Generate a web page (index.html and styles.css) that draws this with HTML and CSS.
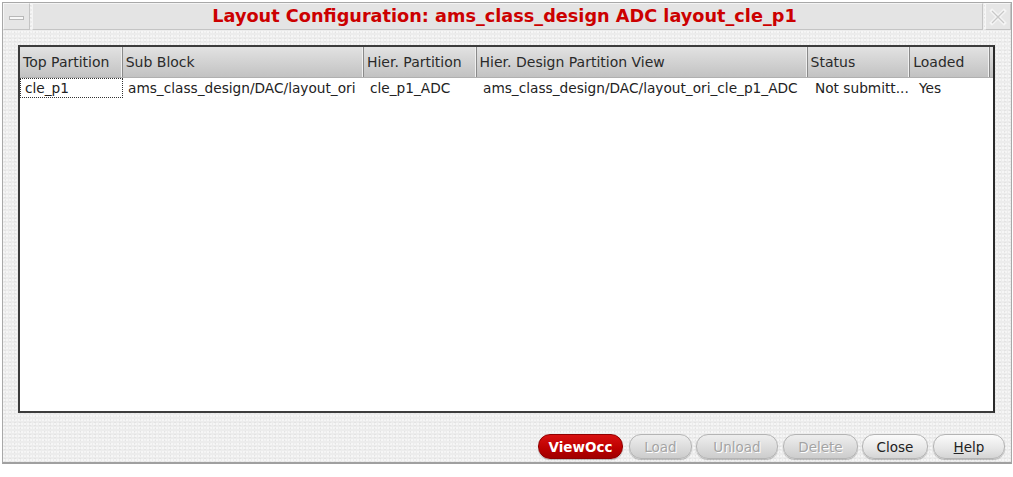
FILE: index.html
```html
<!DOCTYPE html>
<html>
<head>
<meta charset="utf-8">
<link rel="stylesheet" href="styles.css">
</head>
<body>
<div class="window">
  <div class="titlebar">
    <div class="tb-btn tb-min"><span class="min-bar"></span></div>
    <div class="tb-title">Layout Configuration: ams_class_design ADC layout_cle_p1</div>
    <div class="tb-btn tb-close">
      <svg width="18" height="18" viewBox="0 0 18 18"><path d="M3 3 L15 15 M15 3 L3 15" stroke="#f4f4f4" stroke-width="4" stroke-linecap="square" fill="none"/><path d="M3 3 L15 15 M15 3 L3 15" stroke="#c8c8c8" stroke-width="1.2" fill="none"/></svg>
    </div>
  </div>
  <div class="body">
    <div class="table">
      <div class="thead">
        <div class="th c1">Top Partition</div>
        <div class="th c2">Sub Block</div>
        <div class="th c3">Hier. Partition</div>
        <div class="th c4">Hier. Design Partition View</div>
        <div class="th c5">Status</div>
        <div class="th c6">Loaded</div>
        <div class="th c7"></div>
      </div>
      <div class="tr">
        <div class="td c1 focus">cle_p1</div>
        <div class="td c2">ams_class_design/DAC/layout_ori</div>
        <div class="td c3">cle_p1_ADC</div>
        <div class="td c4">ams_class_design/DAC/layout_ori_cle_p1_ADC</div>
        <div class="td c5">Not submitt...</div>
        <div class="td c6">Yes</div>
      </div>
    </div>
    <div class="buttons">
      <div class="btn primary b-view">ViewOcc</div>
      <div class="btn disabled b-load">Load</div>
      <div class="btn disabled b-unload">Unload</div>
      <div class="btn disabled b-delete">Delete</div>
      <div class="btn b-close">Close</div>
      <div class="btn b-help"><u>H</u>elp</div>
    </div>
  </div>
</div>
</body>
</html>
```
FILE: styles.css
```css
* { box-sizing: border-box; }
html, body { margin: 0; padding: 0; background: #ffffff; }
body { font-family: "DejaVu Sans", sans-serif; font-size: 13px; color: #222; }

.window {
  margin: 2px 0 0 2px;
  width: 1010px;
  height: 462px;
  border: 1px solid #a8a8a8;
  border-bottom: 2px solid #a0a0a0;
  background-color: #ececec;
  background-image:
    radial-gradient(circle at 1px 1px, rgba(255,255,255,0.7) 0.6px, transparent 1px),
    radial-gradient(circle at 2px 3px, rgba(0,0,0,0.05) 0.6px, transparent 1px);
  background-size: 3px 4px, 5px 3px;
  display: flex;
  flex-direction: column;
}

.titlebar {
  display: flex;
  height: 27px;
  gap: 2px;
}
.tb-btn {
  width: 27px;
  height: 27px;
  background: #e6e6e6;
  border: 1px solid #c4c4c4;
  border-top-color: #f6f6f6;
  border-left-color: #f6f6f6;
  display: flex;
  align-items: center;
  justify-content: center;
}
.min-bar {
  width: 15px;
  height: 4px;
  background: #f8f8f8;
  border: 1px solid #b8b8b8;
  margin-top: 2px;
}
.tb-close { width: 26px; }
.tb-title {
  flex: 1;
  background: #e4e4e4;
  border: 1px solid #c4c4c4;
  border-top-color: #f4f4f4;
  border-left-color: #f4f4f4;
  color: #cc0000;
  font-weight: bold;
  font-size: 17.7px;
  text-align: center;
  line-height: 25px;
  padding-right: 6px;
}

.body {
  flex: 1;
  display: flex;
  flex-direction: column;
  padding: 15px 15px 0 15px;
}

.table {
  width: 977px;
  height: 368px;
  border: 2px solid #3c3c3c;
  border-right-color: #2a2a2a;
  background: #ffffff;
}
.thead {
  display: flex;
  height: 31px;
  background: linear-gradient(#e2e2e2, #c2c2c2);
  border-bottom: 1px solid #b0b0b0;
}
.th {
  line-height: 31px;
  padding-left: 3px;
  font-size: 14px;
  color: #2a2a2a;
  border-right: 1px solid #8a8a8a;
  box-shadow: inset -1px 0 0 #f0f0f0;
  white-space: nowrap;
  overflow: hidden;
}
.c1 { width: 103px; }
.c2 { width: 242px; }
.c3 { width: 113px; }
.c4 { width: 332px; }
.c5 { width: 103px; }
.c6 { width: 80px; }
.c7 { flex: 1; border-right: none; box-shadow: none; }

.tr { display: flex; height: 20px; }
.td {
  line-height: 20px;
  padding-left: 5px;
  font-size: 13.7px;
  white-space: nowrap;
  overflow: hidden;
  color: #222;
}
.td.focus {
  border: 1px dotted #333;
  line-height: 18px;
  padding-left: 4px;
}
.tr .c2 { padding-left: 5px; }
.tr .c3 { padding-left: 5px; }
.tr .c4 { padding-left: 5px; }
.tr .c5 { padding-left: 5px; }
.tr .c6 { padding-left: 6px; }

.buttons {
  display: flex;
  justify-content: flex-end;
  margin-top: 21px;
  margin-right: -9px;
}
.btn {
  height: 25px;
  border-radius: 12px;
  border: 1px solid #b4b4b4;
  background: linear-gradient(#fbfbfb, #e8e8e8 55%, #d4d4d4);
  box-shadow: 0 1px 1px rgba(0,0,0,0.25);
  display: flex;
  align-items: center;
  justify-content: center;
  font-size: 13.5px;
  color: #222;
}
.btn.primary {
  background: linear-gradient(#d81010, #bb0000 60%, #a00000);
  border-color: #900000;
  color: #ffffff;
  font-weight: bold;
}
.btn.disabled {
  color: #a4a4a4;
  text-shadow: 1px 1px 0 #ffffff;
  background: linear-gradient(#eeeeee, #dcdcdc 55%, #cccccc);
}
.b-view { width: 85px; }
.b-load { width: 63px; margin-left: 6px; }
.b-unload { width: 82px; margin-left: 4px; }
.b-delete { width: 75px; margin-left: 5px; }
.b-close { width: 66px; margin-left: 4px; }
.b-help { width: 72px; margin-left: 5px; }
```
